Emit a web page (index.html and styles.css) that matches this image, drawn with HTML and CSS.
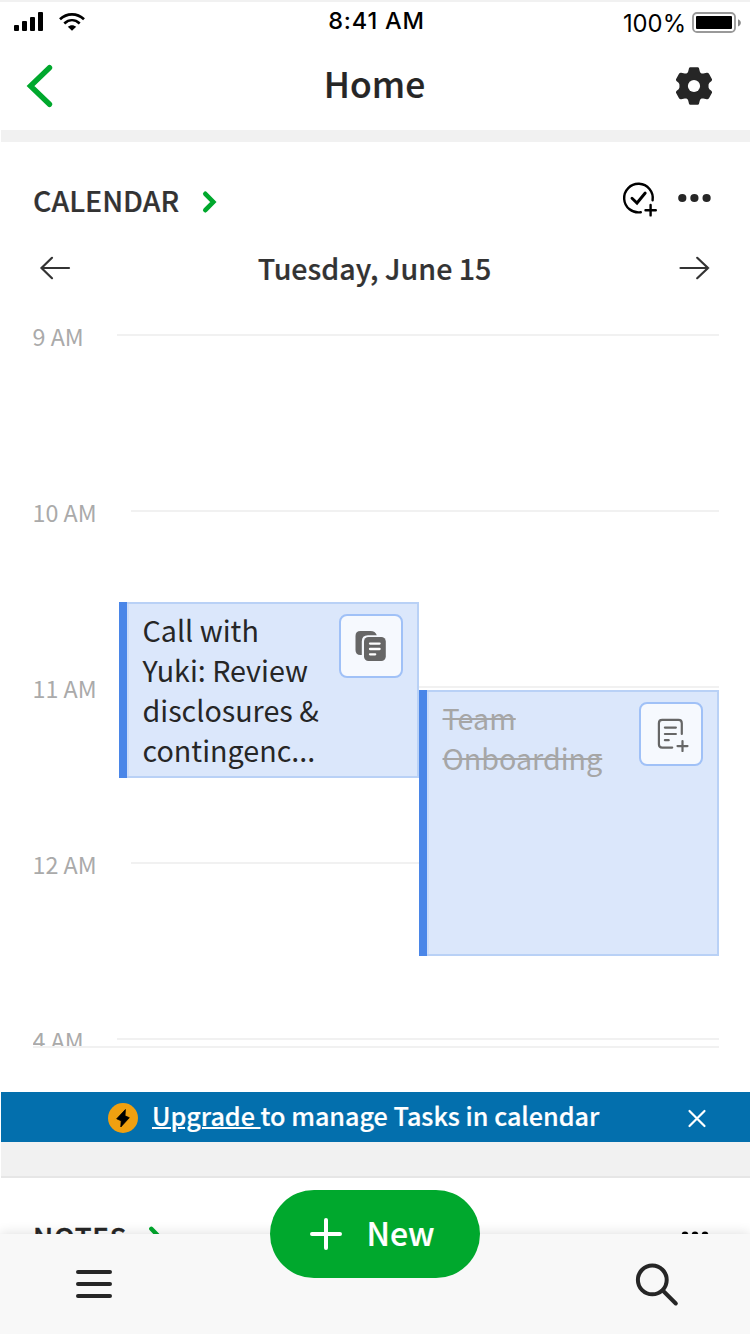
FILE: index.html
```html
<!DOCTYPE html>
<html lang="en">
<head>
    <meta charset="UTF-8">
    <meta name="viewport" content="width=device-width, initial-scale=1.0">
    <title>Home</title>
    <link rel="stylesheet" href="styles.css">
</head>
<body>
    <div class="screen">
        <div class="status-bar">
            <svg class="signal" width="76" height="24" viewBox="12 10 76 24">
                <rect x="14" y="25" width="5" height="6" rx="1"/>
                <rect x="22" y="21" width="5" height="10" rx="1"/>
                <rect x="30" y="17" width="5" height="14" rx="1"/>
                <rect x="38" y="12" width="5" height="19" rx="1"/>
                <g fill="none" stroke="#000" stroke-width="2.7">
                    <path d="M60 19.2C67 12.7 77 12.7 84 19.2"/>
                    <path d="M64.3 23.4C69 19.2 75 19.2 79.7 23.4"/>
                </g>
                <path d="M67.8 26.8C70.2 24.6 73.8 24.6 76.2 26.8L72 30.8Z"/>
            </svg>
            <span class="time">8:41 AM</span>
            <div class="power">
                <span class="percent">100%</span>
                <svg width="50" height="24" viewBox="691 10 50 24">
                    <rect x="693" y="13" width="42" height="19" rx="4" fill="none" stroke="#999" stroke-width="1.8"/>
                    <rect x="696" y="16" width="36" height="13" rx="1"/>
                    <path d="M738 19.2C741.8 20.5 741.8 25.2 738 26.5Z" fill="#888"/>
                </svg>
            </div>
        </div>

        <div class="nav-bar">
            <svg class="back" width="28" height="46" viewBox="26 63 28 46">
                <path d="M49.5 67.7L30.5 86L49.5 104.3" fill="none" stroke="#00a82d" stroke-width="5.4" stroke-linecap="round"/>
            </svg>
            <h1>Home</h1>
            <svg class="gear" width="40" height="40" viewBox="674 66 40 40">
                <path d="M690.3 67.2H697.7Q698.7 67.2 699 68.2L699.8 71.6Q700.2 73 701.6 73.4Q702.5 73.7 703.3 73.4L706.8 72.8Q708.2 72.6 709 73.8L712 79.2Q712.3 80.3 711.3 81.2L709.4 82.8Q708.3 84 708.5 86Q708.3 88 709.4 89.2L711.3 90.8Q712.3 91.7 712 92.8L709 98.2Q708.2 99.4 706.8 99.2L703.3 98.6Q702.5 98.3 701.6 98.6Q700.2 99 699.8 100.4L699 103.8Q698.7 104.8 697.7 104.8H690.3Q689.3 104.8 689 103.8L688.2 100.4Q687.8 99 686.4 98.6Q685.5 98.3 684.7 98.6L681.2 99.2Q679.8 99.4 679 98.2L676 92.8Q675.7 91.7 676.7 90.8L678.6 89.2Q679.7 88 679.5 86Q679.7 84 678.6 82.8L676.7 81.2Q675.7 80.3 676 79.2L679 73.8Q679.8 72.6 681.2 72.8L684.7 73.4Q685.5 73.7 686.4 73.4Q687.8 73 688.2 71.6L689 68.2Q689.3 67.2 690.3 67.2Z" fill="#262626"/>
                <circle cx="694" cy="86" r="6.1" fill="#fff"/>
            </svg>
        </div>

        <div class="divider"></div>

        <div class="calendar">
            <div class="section-head">
                <h2>CALENDAR</h2>
                <svg class="chevron" width="16" height="24" viewBox="201 190 16 24">
                    <path d="M205.3 193.8L213.3 202L205.3 210.2" fill="none" stroke="#00a82d" stroke-width="4.6" stroke-linecap="round"/>
                </svg>
                <svg class="actions" width="92" height="38" viewBox="621 180 92 38">
                    <g fill="none" stroke="#000" stroke-width="2.4" stroke-linecap="round">
                        <path d="M652.6 200.2A14.3 14.3 0 1 0 640.8 212.2"/>
                        <path d="M632 198.2L637 203L645.2 193" stroke-width="2.9"/>
                        <path d="M645.5 210.2H655.8M650.6 205V215.4"/>
                    </g>
                    <g fill="#262626">
                        <circle cx="682.3" cy="198" r="4.1"/>
                        <circle cx="694.4" cy="198" r="4.1"/>
                        <circle cx="706.6" cy="198" r="4.1"/>
                    </g>
                </svg>
            </div>

            <div class="date-row">
                <svg width="32" height="26" viewBox="39 255 32 26">
                    <path d="M69 268H41.5M52 257.8L41.5 268L52 278.2" fill="none" stroke="#333" stroke-width="2.2" stroke-linecap="round"/>
                </svg>
                <span class="date">Tuesday, June 15</span>
                <svg width="32" height="26" viewBox="678 255 32 26">
                    <path d="M680.5 268H708M697.2 257.8L708 268L697.2 278.2" fill="none" stroke="#333" stroke-width="2.2" stroke-linecap="round"/>
                </svg>
            </div>

            <div class="timeline">
                <div class="hour short"><span>9 AM</span></div>
                <div class="hour"><span>10 AM</span></div>
                <div class="hour"><span>11 AM</span></div>
                <div class="hour"><span>12 AM</span></div>
                <div class="hour short"><span>4 AM</span></div>

                <div class="event call">
                    <p>Call with<br>Yuki: Review<br>disclosures &amp;<br>contingenc...</p>
                    <div class="note-button">
                        <svg width="32" height="32" viewBox="355 630 32 32">
                            <path d="M360.5 631H370.5Q375.4 631 376.8 635.3H368Q361.8 635.3 361.8 641.5V655H360.5Q355.5 655 355.5 650V636Q355.5 631 360.5 631Z" fill="#666"/>
                            <rect x="364" y="637" width="21.8" height="24" rx="4.5" fill="#666"/>
                            <path d="M370 643.6H379.6M370 649H379.6M370 654.3H375.2" stroke="#fff" stroke-width="2.3" stroke-linecap="round"/>
                        </svg>
                    </div>
                </div>

                <div class="event team">
                    <p>Team<br>Onboarding</p>
                    <div class="note-button">
                        <svg width="36" height="36" viewBox="653.3 716 36 36">
                            <g fill="none" stroke="#666" stroke-width="2.2" stroke-linecap="round">
                                <path d="M682.1 734V723.2Q682.1 719.9 678.8 719.9H662.5Q659.2 719.9 659.2 723.2V744.3Q659.2 747.6 662.5 747.6H672.5"/>
                                <path d="M665.2 727.6H676.2M665.2 734H676.2M665.2 740.2H669"/>
                                <path d="M677.8 746.1H687.8M682.8 741V751"/>
                            </g>
                        </svg>
                    </div>
                </div>
            </div>
        </div>

        <div class="banner">
            <svg class="bolt" width="30" height="30" viewBox="0 0 30 30">
                <circle cx="15" cy="15" r="15" fill="#f0a010"/>
                <path d="M17.4 6.5L8.7 15.8L13.2 17.8L12.8 24L21.3 14.7L17 12.8Z" stroke="#000" stroke-width=".8" stroke-linejoin="round"/>
            </svg>
            <span class="banner-text"><u>Upgrade </u>to manage Tasks in calendar</span>
            <svg class="close" width="20" height="20" viewBox="687 1108 20 20">
                <path d="M689.5 1111L704.5 1126M704.5 1111L689.5 1126" stroke="#fff" stroke-width="2.2" stroke-linecap="round"/>
            </svg>
        </div>

        <div class="divider large"></div>

        <div class="notes">
            <h2>NOTES</h2>
            <svg class="chevron" width="16" height="24" viewBox="201 190 16 24">
                <path d="M205.3 193.8L213.3 202L205.3 210.2" fill="none" stroke="#00a82d" stroke-width="4.4" stroke-linecap="round"/>
            </svg>
            <svg class="dots" width="28" height="8" viewBox="0 0 28 8">
                <circle cx="4" cy="4" r="3.4"/>
                <circle cx="14" cy="4" r="3.4"/>
                <circle cx="24" cy="4" r="3.4"/>
            </svg>
        </div>

        <div class="tab-bar">
            <svg width="40" height="32" viewBox="74 1268 40 32">
                <path d="M78 1272H110M78 1284H110M78 1296H110" stroke="#262626" stroke-width="4" stroke-linecap="round"/>
            </svg>
            <svg width="46" height="46" viewBox="634 1261.3 46 46">
                <g fill="none" stroke="#262626" stroke-width="4">
                    <circle cx="652.3" cy="1280.2" r="14.4"/>
                    <path d="M662.8 1290.8L675.8 1303.8" stroke-linecap="round"/>
                </g>
            </svg>
            <button class="new-button">
                <svg width="32" height="32" viewBox="0 0 32 32">
                    <path d="M2 16H30M16 2V30" stroke="#fff" stroke-width="4" stroke-linecap="round"/>
                </svg>
                <span>New</span>
            </button>
        </div>
    </div>
</body>
</html>
```
FILE: styles.css
```css
body {
    margin: 0;
    background-color: #fff;
    color: #262626;
    font-family: "Noto Sans CJK SC", "Open Sans", sans-serif;
}
svg {
    display: block;
    flex: none;
}
h1, h2, p {
    margin: 0;
}
.screen {
    width: 750px;
    height: 1334px;
    overflow: hidden;
    display: flex;
    flex-direction: column;
}
.status-bar {
    box-sizing: border-box;
    height: 42px;
    border-top: 2px solid #f1f1f1;
    padding: 8px 9px 0 12px;
    display: grid;
    grid-template-columns: 1fr auto 1fr;
    align-items: start;
    font-family: Inter, sans-serif;
    color: #000;
}
.time {
    font-size: 23.5px;
    font-weight: 500;
    line-height: 22px;
    letter-spacing: 0.8px;
}
.power {
    display: flex;
    justify-content: flex-end;
    gap: 5px;
}
.percent {
    font-size: 23.8px;
    line-height: 27px;
}
.nav-bar {
    height: 88px;
    padding: 0 36px 0 26px;
    display: grid;
    grid-template-columns: 49px 1fr 40px;
    align-items: center;
}
.nav-bar h1 {
    font-size: 35.4px;
    font-weight: 500;
    line-height: 52px;
    margin-top: -6px;
    text-align: center;
    -webkit-text-stroke: 0.2px;
}
.divider {
    height: 12px;
    background-color: #f1f1f1;
    margin-left: 1px;
}
.divider.large {
    height: 34px;
    border-bottom: 2px solid #e6e6e6;
}
.calendar {
    height: 950px;
}
.section-head {
    display: flex;
    align-items: center;
    height: 40px;
    padding: 38px 37px 0 33px;
}
h2 {
    font-size: 28.5px;
    font-weight: 500;
    line-height: 40px;
    color: #333;
    -webkit-text-stroke: 0.2px;
}
.section-head .chevron {
    margin-left: 22px;
    margin-top: 4px;
}
.actions {
    margin-left: auto;
    margin-top: -2px;
}
.date-row {
    display: flex;
    align-items: center;
    justify-content: space-between;
    height: 40px;
    padding: 28px 40px 0 39px;
    color: #333;
}
.date {
    font-size: 28.6px;
    font-weight: 500;
    line-height: 40px;
    -webkit-text-stroke: 0.2px;
}
.timeline {
    position: relative;
    height: 722px;
    margin: 36px 31.5px 0 32.5px;
    border-bottom: 2px solid #f1f1f1;
}
.hour {
    display: flex;
    height: 176px;
    color: #aaa;
    font-size: 23.3px;
    line-height: 24px;
}
.hour span {
    width: 98px;
}
.hour.short span {
    width: 84px;
}
.hour:after {
    content: "";
    flex: 1;
    height: 2px;
    margin-top: 10px;
    background-color: #f1f1f1;
}
.hour:nth-child(5) {
    height: 18px;
    overflow: hidden;
}
.event {
    position: absolute;
    box-sizing: border-box;
    display: flex;
    justify-content: space-between;
    padding: 12px 16px 0 24px;
    background-color: #dbe7fb;
    box-shadow: inset 8px 0 #4a86e8, inset 0 0 0 2px #b9d1f6, inset 10px 0 #cdddf9;
}
.call {
    left: 86px;
    top: 278px;
    width: 300px;
    height: 176px;
}
.team {
    left: 386px;
    top: 366px;
    width: 300px;
    height: 266px;
}
.event p {
    font-size: 28.7px;
    line-height: 40px;
    margin-top: -4px;
    white-space: nowrap;
}
.team p {
    color: #a6a6a6;
    text-decoration: line-through;
    text-decoration-thickness: 2px;
}
.note-button {
    box-sizing: border-box;
    flex: none;
    width: 64px;
    height: 64px;
    display: flex;
    align-items: center;
    justify-content: center;
    background-color: #f6f9fe;
    border: 2px solid #a0c1f7;
    border-radius: 8px;
}
.banner {
    display: flex;
    align-items: center;
    height: 50px;
    margin-left: 1px;
    padding: 0 43px 0 106.5px;
    background-color: #036fad;
    color: #fff;
}
.bolt {
    margin-top: 2px;
}
.banner-text {
    margin: -3px 0 0 14.5px;
    font-size: 25.15px;
    font-weight: 500;
    line-height: 47px;
    -webkit-text-stroke: 0.2px;
}
.banner-text u {
    text-decoration-thickness: 1.5px;
}
.close {
    margin-left: auto;
    margin-top: 2px;
}
.notes {
    display: flex;
    height: 56px;
    padding: 0 41px 0 33px;
    overflow: hidden;
}
.notes h2 {
    margin-top: 38px;
    font-size: 27.5px;
    letter-spacing: 0.8px;
    color: #262626;
    -webkit-text-stroke: 0.4px;
}
.notes .chevron {
    margin: 47px 0 0 19.5px;
}
.dots {
    margin: 53px 0 0 auto;
}
.tab-bar {
    position: relative;
    display: flex;
    align-items: center;
    justify-content: space-between;
    height: 100px;
    padding: 0 70px 0 74px;
    background-color: #f8f8f8;
    box-shadow: 0 0 12px rgba(0, 0, 0, 0.14);
}
.new-button {
    position: absolute;
    left: 270px;
    top: -44px;
    width: 210px;
    height: 88px;
    display: flex;
    align-items: center;
    gap: 24.5px;
    padding: 0 0 0 40px;
    border: none;
    border-radius: 44px;
    background-color: #00a82d;
    color: #fff;
    font-family: inherit;
    font-size: 32px;
    font-weight: 500;
    line-height: 44px;
    -webkit-text-stroke: 0.2px;
}
.new-button span {
    margin-top: -4px;
}
```
